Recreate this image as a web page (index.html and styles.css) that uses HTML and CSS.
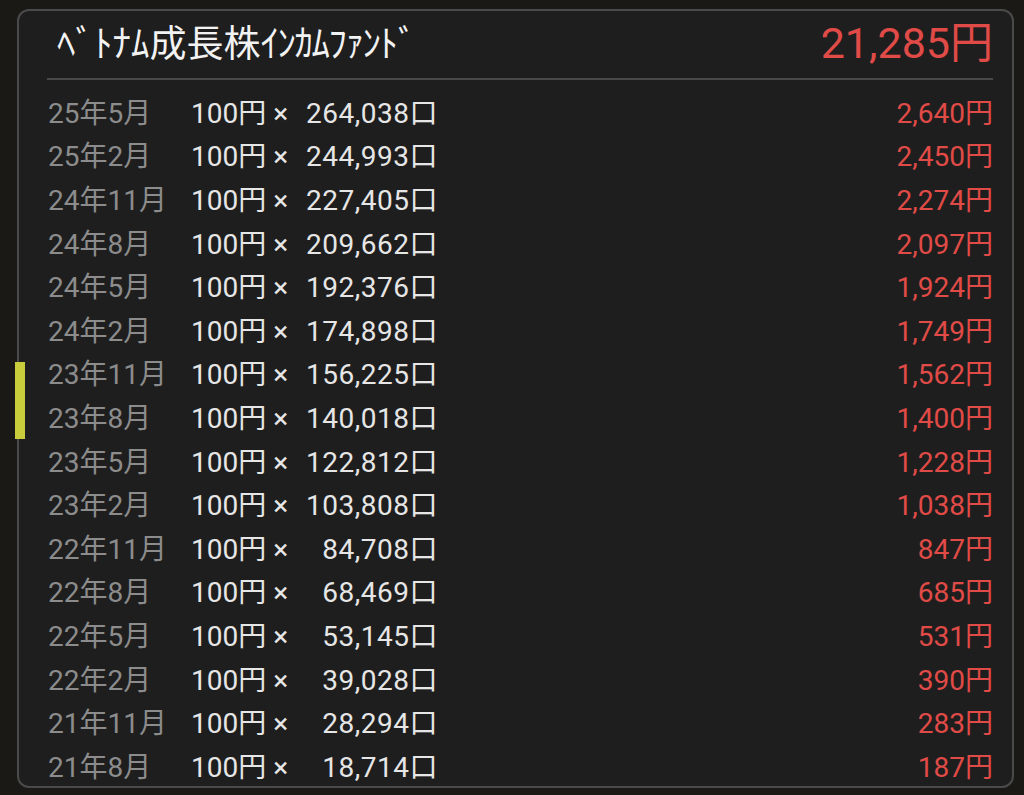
FILE: index.html
```html
<!DOCTYPE html>
<html lang="ja">
<head>
<meta charset="utf-8">
<link rel="stylesheet" href="styles.css">
</head>
<body>
<div class="panel">
  <div class="marker"></div>
  <div class="header">
    <div class="title">ﾍﾞﾄﾅﾑ成長株<span class="kana">ｲﾝｶﾑﾌｧﾝﾄﾞ</span></div>
    <div class="total">21,285円</div>
  </div>
  <div class="rows">
    <div class="row"><span class="date">25年5月</span><span class="unit">100円 ×</span><span class="qty">264,038口</span><span class="amt">2,640円</span></div>
    <div class="row"><span class="date">25年2月</span><span class="unit">100円 ×</span><span class="qty">244,993口</span><span class="amt">2,450円</span></div>
    <div class="row"><span class="date">24年11月</span><span class="unit">100円 ×</span><span class="qty">227,405口</span><span class="amt">2,274円</span></div>
    <div class="row"><span class="date">24年8月</span><span class="unit">100円 ×</span><span class="qty">209,662口</span><span class="amt">2,097円</span></div>
    <div class="row"><span class="date">24年5月</span><span class="unit">100円 ×</span><span class="qty">192,376口</span><span class="amt">1,924円</span></div>
    <div class="row"><span class="date">24年2月</span><span class="unit">100円 ×</span><span class="qty">174,898口</span><span class="amt">1,749円</span></div>
    <div class="row"><span class="date">23年11月</span><span class="unit">100円 ×</span><span class="qty">156,225口</span><span class="amt">1,562円</span></div>
    <div class="row"><span class="date">23年8月</span><span class="unit">100円 ×</span><span class="qty">140,018口</span><span class="amt">1,400円</span></div>
    <div class="row"><span class="date">23年5月</span><span class="unit">100円 ×</span><span class="qty">122,812口</span><span class="amt">1,228円</span></div>
    <div class="row"><span class="date">23年2月</span><span class="unit">100円 ×</span><span class="qty">103,808口</span><span class="amt">1,038円</span></div>
    <div class="row"><span class="date">22年11月</span><span class="unit">100円 ×</span><span class="qty">84,708口</span><span class="amt">847円</span></div>
    <div class="row"><span class="date">22年8月</span><span class="unit">100円 ×</span><span class="qty">68,469口</span><span class="amt">685円</span></div>
    <div class="row"><span class="date">22年5月</span><span class="unit">100円 ×</span><span class="qty">53,145口</span><span class="amt">531円</span></div>
    <div class="row"><span class="date">22年2月</span><span class="unit">100円 ×</span><span class="qty">39,028口</span><span class="amt">390円</span></div>
    <div class="row"><span class="date">21年11月</span><span class="unit">100円 ×</span><span class="qty">28,294口</span><span class="amt">283円</span></div>
    <div class="row"><span class="date">21年8月</span><span class="unit">100円 ×</span><span class="qty">18,714口</span><span class="amt">187円</span></div>
  </div>
</div>
</body>
</html>
```

FILE: styles.css
```css
html, body {
  margin: 0;
  padding: 0;
  background: #1a1916;
  overflow: hidden;
}
body {
  width: 1024px;
  height: 795px;
  padding: 9px 10px 7px 17px;
  box-sizing: border-box;
  font-family: Roboto, "Noto Sans CJK JP", sans-serif;
}
.panel {
  position: relative;
  height: 100%;
  box-sizing: border-box;
  border: 2px solid #4a4a4a;
  border-radius: 12px;
  background: #1e1e1e;
  padding: 0 19px 0 28px;
}
.marker {
  position: absolute;
  left: -4px;
  top: 351px;
  width: 10px;
  height: 77px;
  background: #c9cd3c;
}
.header {
  display: flex;
  align-items: center;
  justify-content: space-between;
  height: 67px;
  border-bottom: 2px solid #484848;
}
.title {
  padding-left: 10px;
  font-family: "Noto Sans CJK JP", sans-serif;
  font-size: 37px;
  color: #f2f2f2;
  line-height: 1;
  margin-top: -6px;
}
.kana {
  letter-spacing: -1.5px;
}
.total {
  font-size: 43px;
  color: #e04b47;
  line-height: 1;
  margin-top: -2px;
}
.rows {
  padding-top: 12px;
}
.row {
  display: grid;
  grid-template-columns: 143px 105px 142px 1fr;
  height: 43.6px;
  align-items: center;
  font-size: 28px;
  line-height: 1;
  padding-left: 1px;
}
.date {
  color: #8c8c8c;
}
.unit {
  color: #e6e6e6;
}
.qty {
  color: #e6e6e6;
  text-align: right;
  letter-spacing: 0.5px;
}
.amt {
  color: #e04b47;
  text-align: right;
}
```
